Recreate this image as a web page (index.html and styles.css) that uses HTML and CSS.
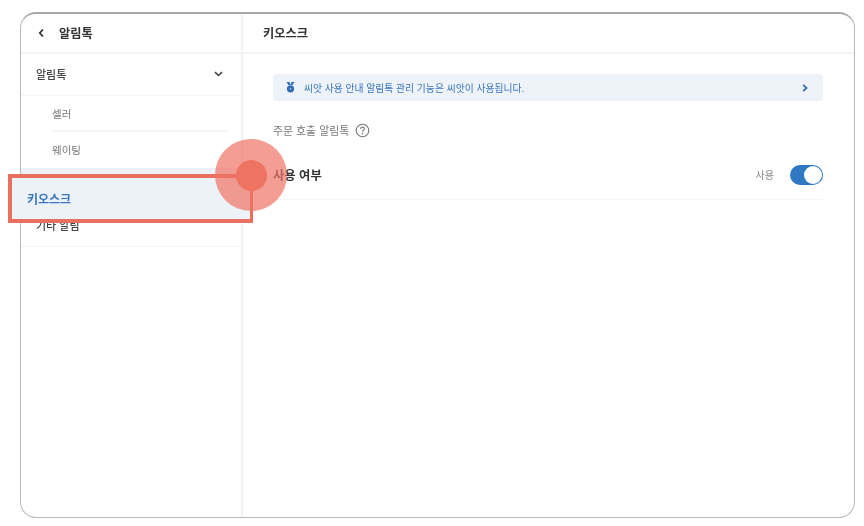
FILE: index.html
```html
<!DOCTYPE html>
<html lang="ko">
<head>
<meta charset="utf-8">
<title>키오스크</title>
<link rel="stylesheet" href="styles.css">
</head>
<body>
<div class="stage">
  <div class="frame">
    <aside class="side">
      <div class="side-head">
        <svg class="back" width="7" height="10" viewBox="0 0 7 10"><path d="M5 1.500 1.800 5 5 8.500" fill="none" stroke="#333" stroke-width="1.800"/></svg>
        <span class="title">알림톡</span>
      </div>
      <div class="group">
        <span class="group-label">알림톡</span>
        <svg width="9" height="6" viewBox="0 0 9 6"><path d="M1 1.200 4.500 4.500 8 1.200" fill="none" stroke="#444" stroke-width="1.600"/></svg>
      </div>
      <div class="sub">
        <div class="sub-row sub-line"><span class="soft">셀러</span></div>
        <div class="sub-row"><span class="soft">웨이팅</span></div>
      </div>
      <div class="active-row"></div>
      <div class="group other"><span class="group-label">기타 알림</span></div>
    </aside>
    <main class="main">
      <div class="main-head"><span class="title">키오스크</span></div>
      <div class="content">
        <div class="notice">
          <svg class="medal" width="9" height="11" viewBox="0 0 9 11"><path d="M0.500 0h3l1 3h-2zM8.500 0h-3l-1 3h2z" fill="#2f6db5"/><circle cx="4.500" cy="6.800" r="3.600" fill="#2f6db5"/><circle cx="4.500" cy="6.800" r="1" fill="#8fb4dc"/></svg>
          <span class="notice-text">씨앗 사용 안내 알림톡 관리 기능은 씨앗이 사용됩니다.</span>
          <svg class="notice-arrow" width="6" height="8" viewBox="0 0 6 8"><path d="M1.200 .8 4.500 4 1.200 7.200" fill="none" stroke="#2f6db5" stroke-width="1.800"/></svg>
        </div>
        <div class="section">
          <span class="soft">주문 호출 알림톡</span>
          <svg width="15" height="15" viewBox="0 0 15 15"><circle cx="7.500" cy="7.500" r="6.300" fill="none" stroke="#777" stroke-width="1.100"/><path d="M5.700 5.900c0-2.300 3.700-2.300 3.700-.1 0 1.400-1.900 1.500-1.900 2.900" fill="none" stroke="#777" stroke-width="1.100"/><circle cx="7.500" cy="10.600" r=".8" fill="#777"/></svg>
        </div>
        <div class="setting">
          <span class="setting-label">사용 여부</span>
          <span class="state">사용</span>
          <span class="toggle"><span class="knob"></span></span>
        </div>
      </div>
    </main>
  </div>
  <div class="callout"><span class="callout-text">키오스크</span></div>
  <div class="pulse"><span class="pulse-dot"></span></div>
</div>
</body>
</html>
```
FILE: styles.css
```css
* { box-sizing: border-box; }
html, body { margin: 0; height: 100%; background: #fff; overflow: hidden; }
body { font-family: "Noto Sans CJK KR", "Noto Sans", sans-serif; color: #333; }
.stage { position: relative; width: 864px; height: 526px; padding: 12px 9px 8px 20px; }
.frame {
  display: flex; width: 100%; height: 100%;
  border: 1px solid #b9b9b9; border-top: 2px solid #a8a8a8;
  border-radius: 16px; overflow: hidden; background: #fff;
}
.soft { filter: blur(.5px); }
.side { width: 222px; flex: none; border-right: 2px solid #f1f2f4; display: flex; flex-direction: column; }
.side-head, .main-head { height: 40px; flex: none; border-bottom: 2px solid #f3f4f6; display: flex; align-items: center; }
.side-head { padding-left: 17px; gap: 14px; }
.back { flex: none; }
.title { font-size: 12.200px; font-weight: 700; color: #333; filter: blur(.5px); }
.group { height: 42px; flex: none; padding: 0 18px 2px 15px; display: flex; align-items: center; justify-content: space-between; border-bottom: 1px solid #f3f4f6; }
.group-label { font-size: 11px; font-weight: 500; color: #444; filter: blur(.5px); }
.sub { display: flex; flex-direction: column; padding: 0 12px 0 31px; }
.sub-row { height: 36px; padding-bottom: 2px; display: flex; align-items: center; font-size: 10.500px; color: #777; }
.sub-line { border-bottom: 2px solid #f5f6f7; padding-bottom: 0; }
.active-row { height: 37px; flex: none; background: #eef2f8; }
.main { flex: 1; min-width: 0; display: flex; flex-direction: column; }
.main-head { padding-left: 20px; }
.content { padding: 20px 31px 0 30px; }
.notice { height: 27px; background: #eef2f9; border-radius: 4px; display: flex; align-items: center; padding: 0 15px 0 13px; }
.medal { flex: none; margin-right: 9px; }
.notice-text { flex: 1; font-size: 9.800px; color: #3a76bd; filter: blur(.4px); }
.section { display: flex; align-items: center; gap: 6px; margin-top: 22px; height: 14px; font-size: 10.900px; color: #777; }
.setting { height: 50px; margin-top: 13px; border-bottom: 1px solid #f3f4f6; display: flex; align-items: center; }
.setting-label { flex: 1; font-size: 12.300px; font-weight: 700; color: #333; filter: blur(.5px); }
.state { font-size: 10px; color: #888; margin-right: 16px; filter: blur(.4px); }
.toggle { width: 33px; height: 20px; border-radius: 10px; background: #2f78c4; padding: 1px; display: flex; justify-content: flex-end; }
.knob { width: 18px; height: 18px; border-radius: 50%; background: #fff; }
.callout {
  position: absolute; left: 8px; top: 174px; width: 245px; height: 49px;
  border: 4px solid #e9705f; border-right-width: 3px; background: #edf2f9; display: flex; align-items: center; padding-left: 15px;
}
.callout-text { font-size: 12px; font-weight: 700; color: #3a76bd; filter: blur(.5px); }
.pulse {
  position: absolute; left: 215px; top: 139px; width: 72px; height: 72px; border-radius: 50%;
  background: rgba(240, 115, 100, .7); display: flex; align-items: center; justify-content: center;
}
.pulse-dot { width: 31px; height: 31px; border-radius: 50%; background: #ee7361; }
```
